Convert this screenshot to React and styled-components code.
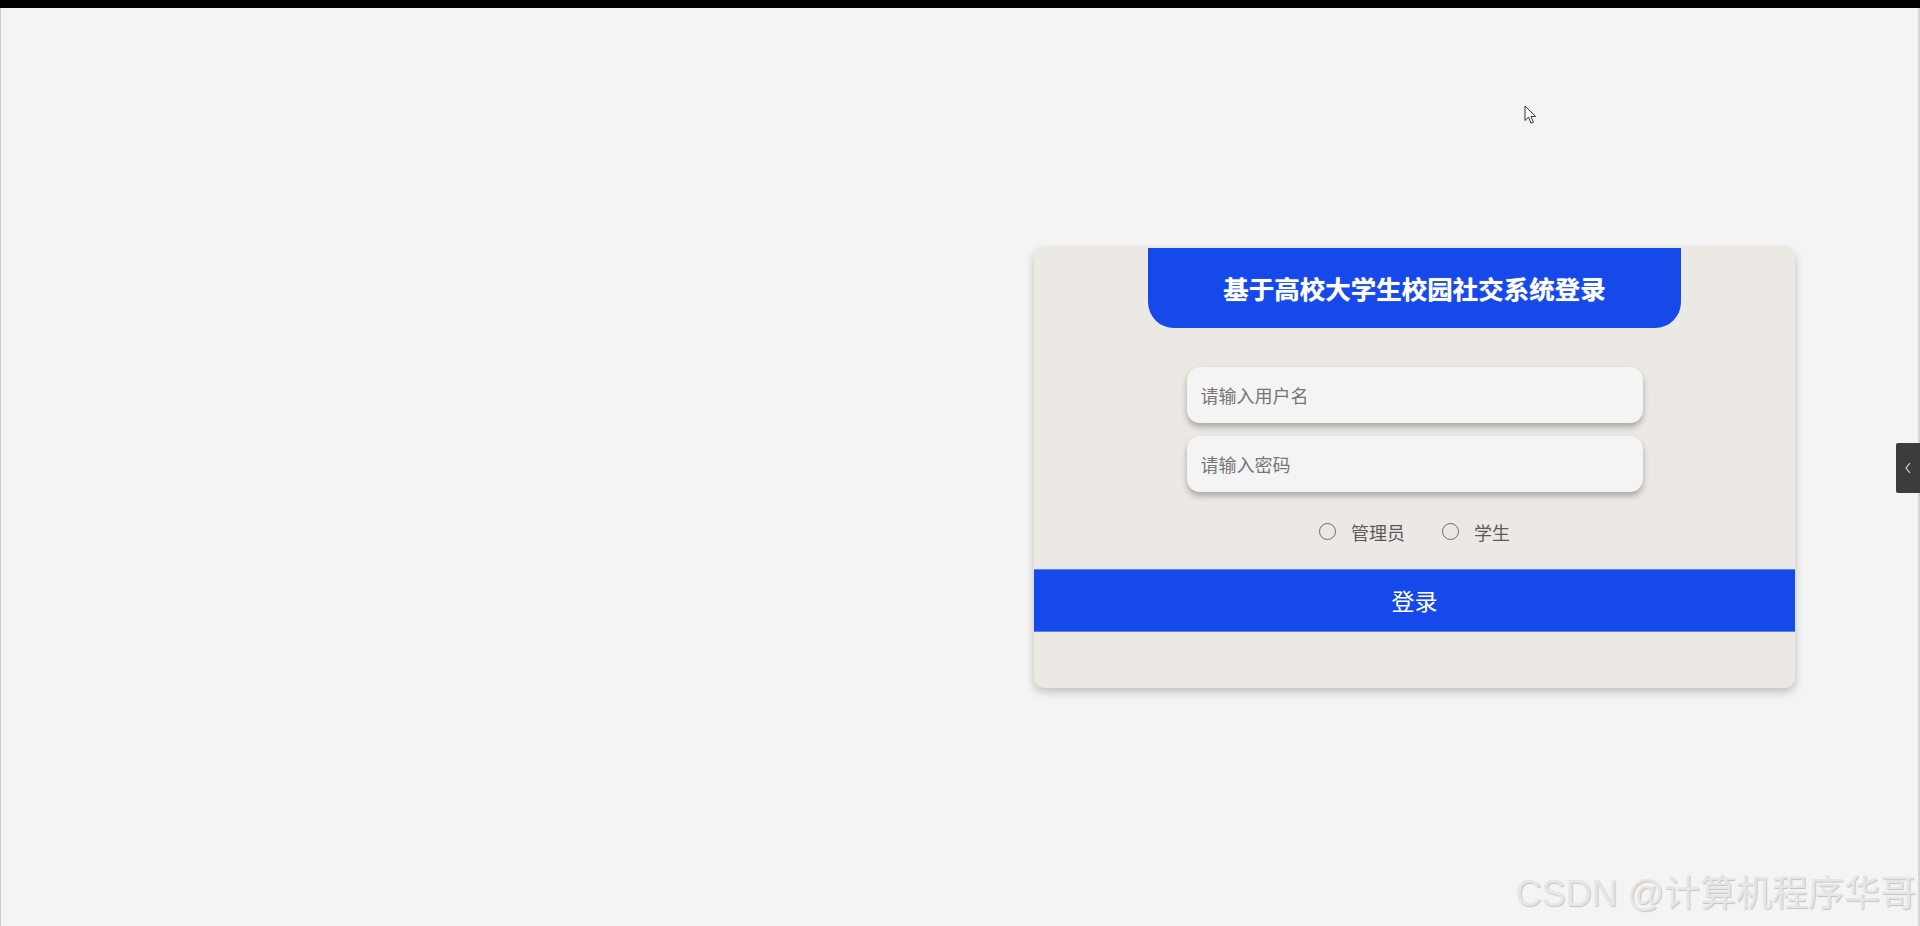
import React from 'react';
import styled, { createGlobalStyle } from 'styled-components';

const BLUE = '#1549ea';

const GlobalStyle = createGlobalStyle`
  html, body { margin: 0; padding: 0; height: 100%; }
  body {
    background: #f4f4f4;
    font-family: "Noto Sans CJK SC", "Noto Sans", sans-serif;
    overflow: hidden;
  }
  #root { height: 100%; }
  * { box-sizing: border-box; }
`;

const Screen = styled.div`
  position: relative;
  height: 100vh;
  display: flex;
  flex-direction: column;
`;

const TopBar = styled.div`
  height: 8px;
  flex-shrink: 0;
  background: #000;
`;

const Viewport = styled.main`
  flex: 1;
  display: flex;
  align-items: center;
  justify-content: flex-end;
  padding-right: 123px;
  background: #f4f4f4;
  border-left: 1px solid #cfcfcf;
  border-right: 2px solid #d6d6d6;
`;

const Card = styled.section`
  width: 761px;
  display: flex;
  flex-direction: column;
  align-items: center;
  padding-bottom: 56px;
  background: #ece9e4;
  border-radius: 10px;
  box-shadow: 0 4px 10px rgba(0, 0, 0, 0.22);
`;

const Header = styled.header`
  width: 533px;
  height: 80px;
  margin-top: 1px;
  display: flex;
  align-items: center;
  justify-content: center;
  background: ${BLUE};
  border-radius: 0 0 26px 26px;
`;

const Title = styled.h1`
  margin: 0;
  color: #fff;
  font-size: 25.5px;
  font-weight: 700;
  letter-spacing: 0;
  text-shadow: 0 0 1px rgba(255, 255, 255, 0.7);
`;

const Form = styled.div`
  width: 456px;
  margin-top: 39px;
  display: flex;
  flex-direction: column;
  gap: 13px;
`;

const Field = styled.input`
  height: 56px;
  width: 100%;
  padding: 0 14px;
  border: none;
  outline: none;
  border-radius: 13px;
  background: #f4f4f4;
  box-shadow: 0 4px 6px rgba(0, 0, 0, 0.28);
  font-family: inherit;
  font-size: 18px;
  color: #333;
  &::placeholder { color: #767676; }
`;

const RadioRow = styled.div`
  height: 24px;
  margin-top: 28px;
  display: flex;
  align-items: center;
  gap: 37px;
`;

const RadioLabel = styled.label`
  display: flex;
  align-items: center;
  gap: 15px;
  font-size: 18px;
  color: #5a5a5a;
  line-height: 1;
`;

const Radio = styled.input`
  appearance: none;
  width: 17px;
  height: 17px;
  margin: 0;
  border: 1.6px solid #6c6c6c;
  border-radius: 50%;
  background: transparent;
`;

const LoginButton = styled.button`
  width: 100%;
  height: 63px;
  margin-top: 25px;
  border: none;
  border-top: 1px solid #5b80ee;
  border-bottom: 1px solid #5b80ee;
  background: ${BLUE};
  color: #fff;
  font-family: inherit;
  font-size: 23px;
  font-weight: 400;
  cursor: pointer;
`;

const SideTab = styled.div`
  position: absolute;
  right: 0;
  top: 443px;
  width: 24px;
  height: 50px;
  display: flex;
  align-items: center;
  justify-content: center;
  background: #3c3c3c;
  border-radius: 2px 0 0 2px;
`;

const Cursor = styled.svg`
  position: absolute;
  left: 1524px;
  top: 105px;
`;

const Watermark = styled.div`
  position: absolute;
  right: 4px;
  bottom: 14px;
  font-family: "Liberation Sans", "Noto Sans CJK SC", sans-serif;
  font-size: 36px;
  line-height: 1;
  white-space: nowrap;
  color: #e6e6e6;
  text-shadow: 1px 1px 1px rgba(0, 0, 0, 0.2);
  pointer-events: none;
`;

export default function App() {
  return (
    <>
      <GlobalStyle />
      <Screen>
        <TopBar />
        <Viewport>
          <Card>
            <Header>
              <Title>基于高校大学生校园社交系统登录</Title>
            </Header>
            <Form>
              <Field type="text" placeholder="请输入用户名" />
              <Field type="password" placeholder="请输入密码" />
            </Form>
            <RadioRow>
              <RadioLabel>
                <Radio type="radio" name="role" />
                管理员
              </RadioLabel>
              <RadioLabel>
                <Radio type="radio" name="role" />
                学生
              </RadioLabel>
            </RadioRow>
            <LoginButton>登录</LoginButton>
          </Card>
        </Viewport>
        <SideTab>
          <svg width="8" height="12" viewBox="0 0 8 12">
            <polyline points="6,1 2,6 6,11" fill="none" stroke="#d8d8d8" strokeWidth="1.2" />
          </svg>
        </SideTab>
        <Cursor width="13" height="20" viewBox="0 0 13 20">
          <path
            d="M1 1 L1 15.5 L4.5 12.2 L7 18.2 L9.4 17.2 L6.9 11.4 L11.6 11.4 Z"
            fill="#fff"
            stroke="#333"
            strokeWidth="1"
            strokeLinejoin="round"
          />
        </Cursor>
        <Watermark>CSDN @计算机程序华哥</Watermark>
      </Screen>
    </>
  );
}
